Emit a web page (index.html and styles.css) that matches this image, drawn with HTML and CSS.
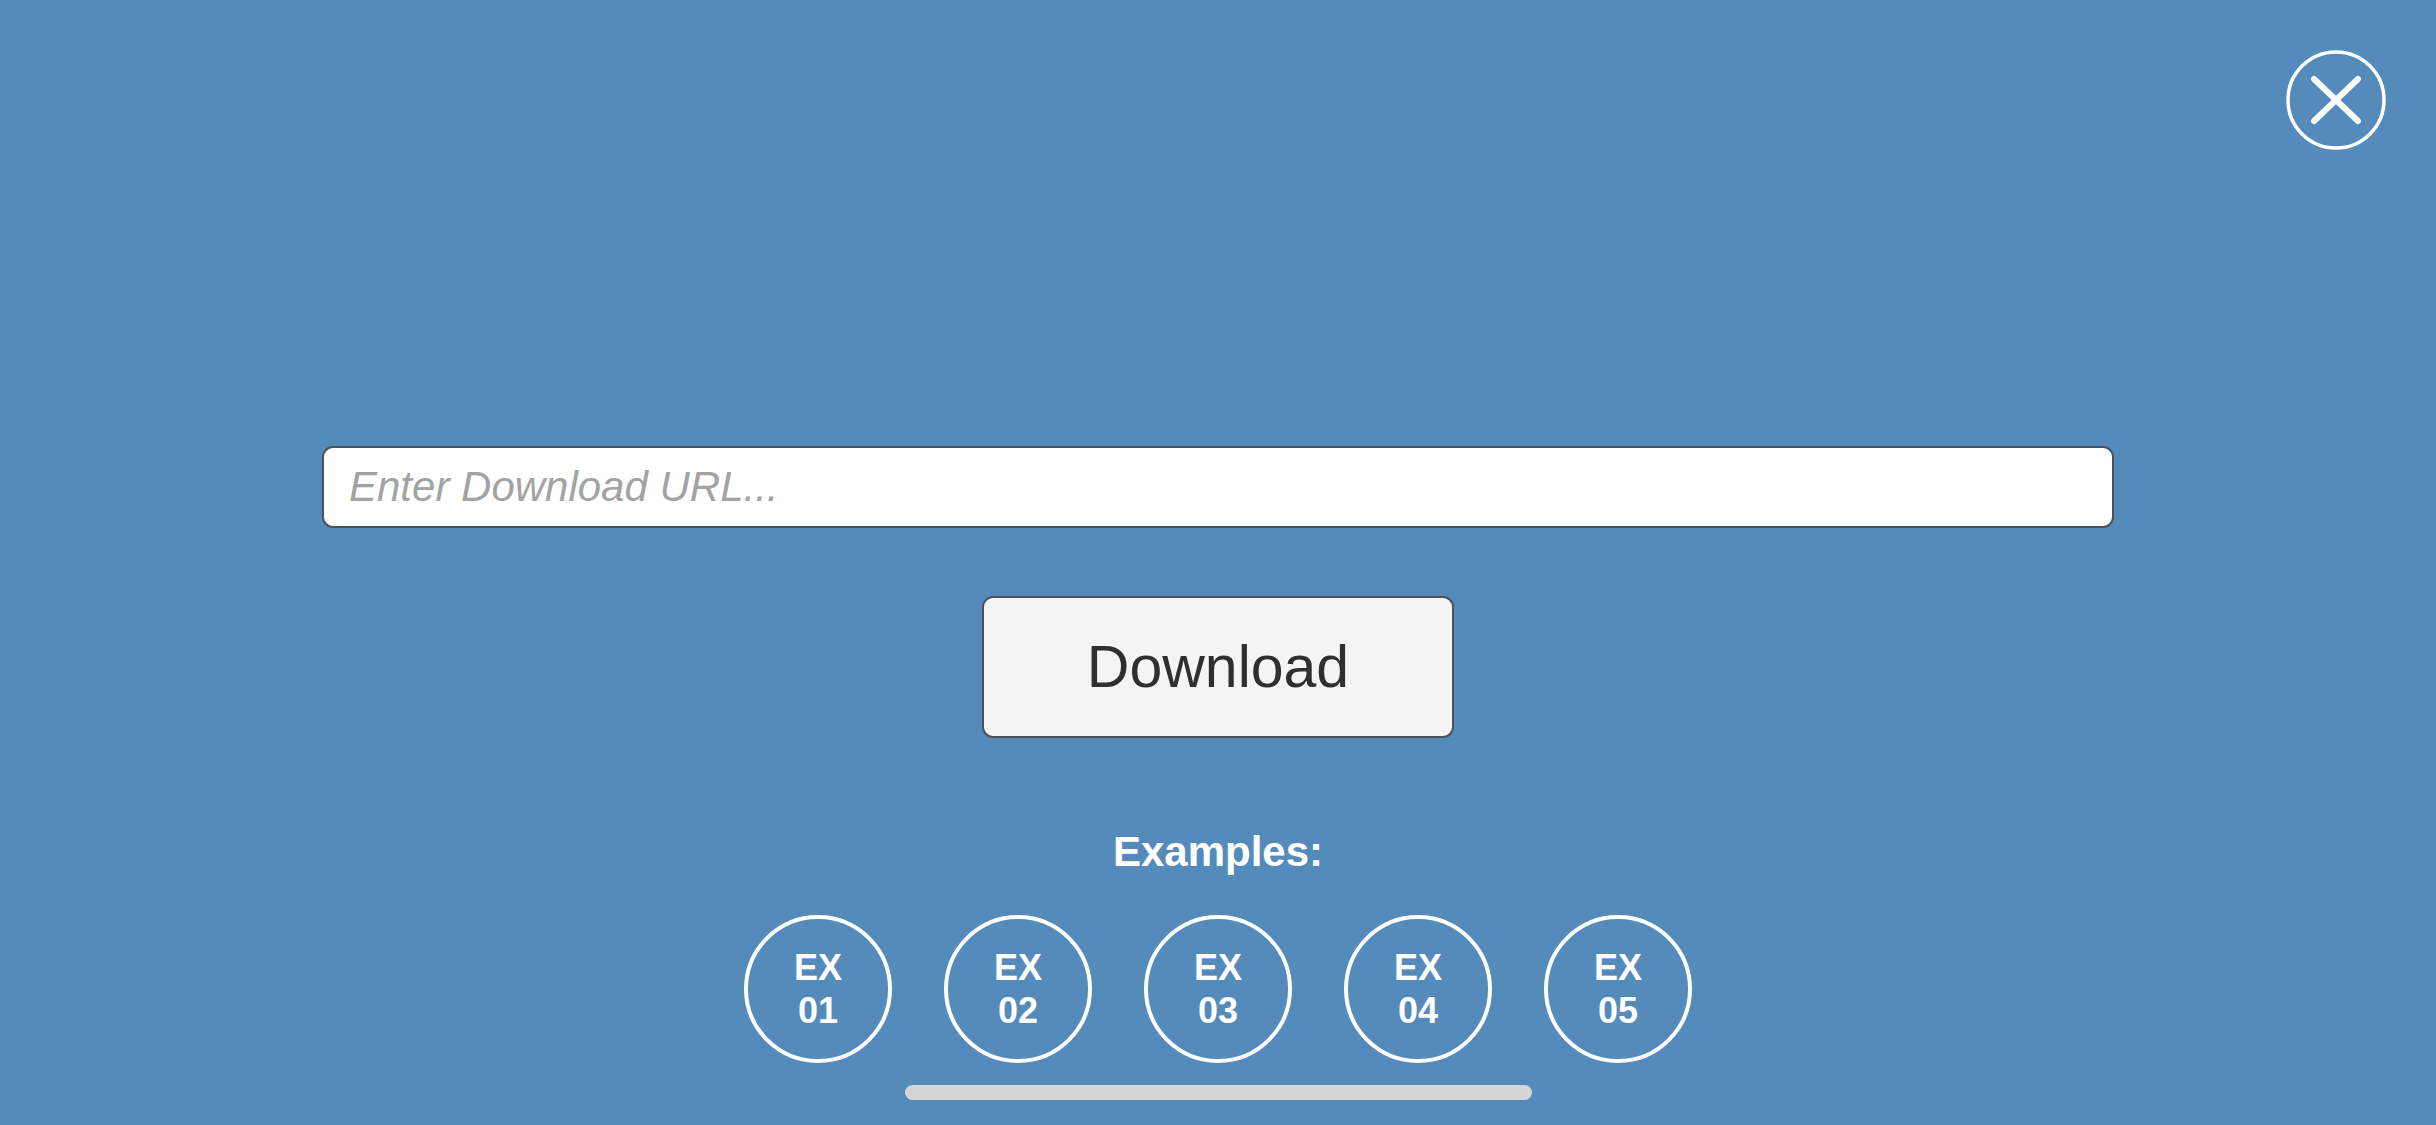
FILE: index.html
```html
<!DOCTYPE html>
<html>
<head>
<meta charset="utf-8">
<link rel="stylesheet" href="styles.css">
</head>
<body>
<div class="screen">
  <button class="close" aria-label="Close">
    <svg viewBox="0 0 100 100" width="100" height="100">
      <circle cx="50" cy="50" r="48" fill="none" stroke="#fff" stroke-width="3.5"/>
      <path d="M28 29 L72 71 M72 29 L28 71" stroke="#fff" stroke-width="6" stroke-linecap="round" fill="none"/>
    </svg>
  </button>
  <main class="content">
    <input class="url" type="text" placeholder="Enter Download URL...">
    <button class="download">Download</button>
    <div class="examples-label">Examples:</div>
    <div class="examples">
      <div class="ex">EX<br>01</div>
      <div class="ex">EX<br>02</div>
      <div class="ex">EX<br>03</div>
      <div class="ex">EX<br>04</div>
      <div class="ex">EX<br>05</div>
    </div>
    <div class="home-bar"></div>
  </main>
</div>
</body>
</html>
```
FILE: styles.css
```css
html, body {
  margin: 0;
  padding: 0;
}
body {
  width: 2436px;
  height: 1125px;
  background: #558bba;
  font-family: "Liberation Sans", Arial, sans-serif;
  overflow: hidden;
}
.screen {
  position: relative;
  width: 2436px;
  height: 1125px;
}
.close {
  position: absolute;
  top: 50px;
  right: 50px;
  width: 100px;
  height: 100px;
  padding: 0;
  border: none;
  background: transparent;
  display: block;
}
.close svg {
  display: block;
}
.content {
  display: flex;
  flex-direction: column;
  align-items: center;
  padding-top: 446px;
}
.url {
  box-sizing: border-box;
  width: 1792px;
  height: 82px;
  border: 2px solid #4d5258;
  border-radius: 11px;
  background: #fff;
  padding: 0 0 0 25px;
  margin: 0;
  font-family: "Liberation Sans", Arial, sans-serif;
  font-size: 42px;
  font-style: italic;
  color: #333;
  outline: none;
}
.url::placeholder {
  color: #a3a3a3;
  font-style: italic;
}
.download {
  box-sizing: border-box;
  margin-top: 68px;
  width: 472px;
  height: 142px;
  border: 2px solid #4d5258;
  border-radius: 11px;
  background: #f4f4f4;
  color: #2f2f2f;
  font-family: "Liberation Sans", Arial, sans-serif;
  font-size: 59px;
  padding: 0;
}
.examples-label {
  margin-top: 93px;
  color: #fff;
  font-weight: bold;
  font-size: 42px;
  line-height: 42px;
}
.examples {
  margin-top: 42px;
  display: flex;
  gap: 52px;
}
.ex {
  box-sizing: border-box;
  width: 148px;
  height: 148px;
  border: 4px solid #fff;
  border-radius: 50%;
  display: flex;
  align-items: center;
  justify-content: center;
  text-align: center;
  color: #fff;
  font-weight: bold;
  font-size: 36px;
  line-height: 43px;
}
.home-bar {
  margin-top: 22px;
  width: 627px;
  height: 15px;
  border-radius: 8px;
  background: #d5d5d5;
}
```
